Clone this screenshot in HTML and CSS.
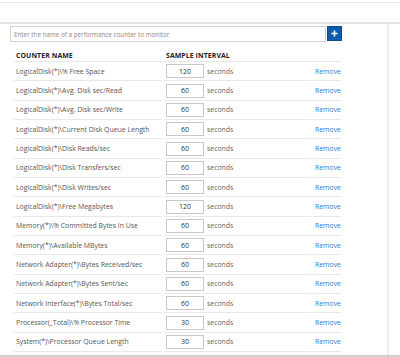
FILE: index.html
```html
<!DOCTYPE html>
<html lang="en">
  <head>
    <meta charset="UTF-8" />
    <title>Performance counters</title>
    <link rel="stylesheet" href="styles.css">
  </head>
  <body>
    <div class="topbar"></div>
    <div class="subbar"></div>
    <div class="main">
      <div class="panel">
        <div class="searchRow">
          <input class="search" type="text" placeholder="Enter the name of a performance counter to monitor">
          <button class="addBtn">
            <svg width="7" height="7" viewBox="0 0 7 7"><path d="M3.5 0.5v6M0.5 3.5h6" stroke="#fff" stroke-width="1.6"/></svg>
          </button>
        </div>
        <table class="counters">
          <thead>
            <tr>
              <th class="colName">COUNTER NAME</th>
              <th class="colInterval">SAMPLE INTERVAL</th>
              <th class="colAction"></th>
            </tr>
          </thead>
          <tbody id="rows"></tbody>
        </table>
      </div>
      <div class="side"></div>
    </div>
    <div class="footer"></div>
    <script>
      const counters = [
        ["LogicalDisk(*)\\% Free Space", 120],
        ["LogicalDisk(*)\\Avg. Disk sec/Read", 60],
        ["LogicalDisk(*)\\Avg. Disk sec/Write", 60],
        ["LogicalDisk(*)\\Current Disk Queue Length", 60],
        ["LogicalDisk(*)\\Disk Reads/sec", 60],
        ["LogicalDisk(*)\\Disk Transfers/sec", 60],
        ["LogicalDisk(*)\\Disk Writes/sec", 60],
        ["LogicalDisk(*)\\Free Megabytes", 120],
        ["Memory(*)\\% Committed Bytes In Use", 60],
        ["Memory(*)\\Available MBytes", 60],
        ["Network Adapter(*)\\Bytes Received/sec", 60],
        ["Network Adapter(*)\\Bytes Sent/sec", 60],
        ["Network Interface(*)\\Bytes Total/sec", 60],
        ["Processor(_Total)\\% Processor Time", 30],
        ["System(*)\\Processor Queue Length", 30]
      ];

      const tbody = document.getElementById("rows");
      counters.forEach(c => {
        let tr = document.createElement("tr");
        tr.innerHTML =
          '<td class="name">' + c[0] + '</td>' +
          '<td class="interval"><input class="secs" type="text" value="' + c[1] + '"><span class="unit">seconds</span></td>' +
          '<td class="action"><a href="#" class="remove">Remove</a></td>';
        tbody.appendChild(tr);
      });
    </script>
  </body>
</html>
```

FILE: styles.css
```css
* {
  margin: 0;
  padding: 0;
  box-sizing: border-box;
}

body {
  width: 400px;
  height: 357px;
  background: #fff;
  font-family: "Open Sans", "Noto Sans", sans-serif;
  color: #444;
  display: flex;
  flex-direction: column;
  overflow: hidden;
}

.topbar {
  height: 3px;
  border-bottom: 1px solid #e6e6e6;
}

.subbar {
  height: 21px;
  border-bottom: 2px solid #e3e3e3;
}

.main {
  display: flex;
  height: 331px;
}

.panel {
  width: 387px;
  padding: 2px 0 0 10px;
}

.side {
  flex: 1;
  border-left: 2px solid #ededed;
}

.footer {
  flex: 1;
  border-top: 2px solid #d0d0d0;
  background: #fafafa;
}

.searchRow {
  display: flex;
  align-items: flex-start;
}

.search {
  width: 316px;
  height: 16px;
  border: 1px solid #d2d2d2;
  padding: 0 3px;
  font-family: inherit;
  font-size: 6.3px;
  color: #555;
  outline: none;
}

.search::placeholder {
  color: #8a8a8a;
}

.addBtn {
  width: 15px;
  height: 15px;
  margin-left: 1px;
  background: #105cab;
  border: 1px solid #0b4c90;
  display: flex;
  align-items: center;
  justify-content: center;
}

.counters {
  margin: 5px 0 0 2px;
  border-collapse: separate;
  border-spacing: 2px 0;
  font-size: 6.9px;
}

.counters th {
  text-align: left;
  font-weight: 700;
  color: #222;
  height: 15px;
  padding: 0 0 1px 2px;
  vertical-align: bottom;
  border-bottom: 1px solid #e6e6e6;
  letter-spacing: 0.1px;
}

.colName {
  width: 148px;
}

.colInterval {
  width: 147px;
}

.colAction {
  width: 27px;
}

.counters td {
  height: 19.35px;
  padding: 0 0 0 2px;
  vertical-align: middle;
  border-bottom: 1px solid #e8e8e8;
  white-space: nowrap;
}

.name {
  color: #555;
}

.secs {
  width: 38px;
  height: 14px;
  border: 1px solid #c8c8c8;
  font-family: inherit;
  font-size: 7px;
  color: #333;
  text-align: center;
  vertical-align: middle;
}

.unit {
  margin-left: 3px;
  color: #666;
  vertical-align: middle;
}

.action {
  text-align: left;
  padding-left: 2px;
}

.remove {
  color: #2f7bcf;
  text-decoration: none;
}
```
